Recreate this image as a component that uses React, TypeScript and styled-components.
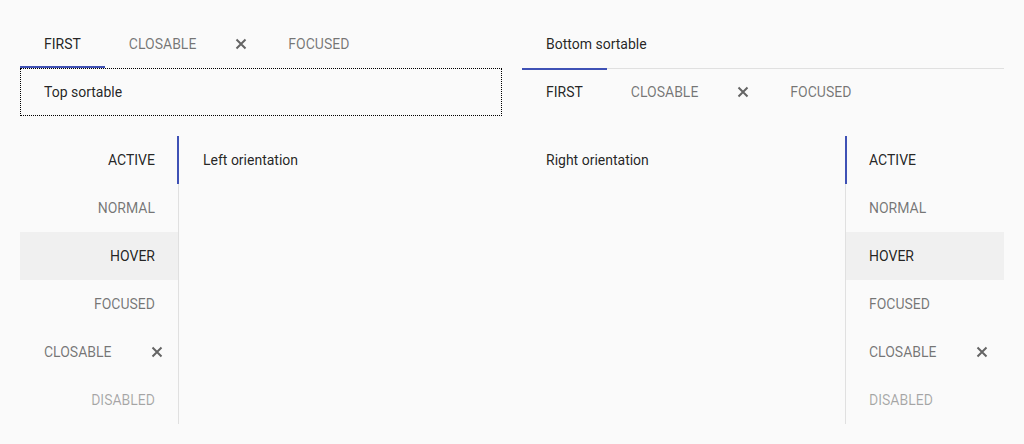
import styled, {createGlobalStyle} from "styled-components";

const GlobalStyle = createGlobalStyle`
  html, body {
    margin: 0;
    background: #fafafa;
    font-family: Roboto, "Noto Sans", sans-serif;
    font-size: 14px;
    color: rgba(0, 0, 0, 0.87);
  }
  * {
    box-sizing: border-box;
  }
`

const Page = styled.div`
  padding: 20px;
  display: grid;
  grid-template-columns: 482px 482px;
  column-gap: 20px;
  row-gap: 20px;
  align-items: start;
`

const Cell = styled.div`
  display: flex;
  flex-direction: column;
`

const Row = styled.div`
  display: flex;
  align-items: stretch;
`

const TabBar = styled.div<{ $lined?: boolean }>`
  display: flex;
  flex: 0 0 48px;
  height: 48px;
  box-shadow: ${p => p.$lined ? "inset 0 1px 0 #e0e0e0" : "none"};
`

type Side = "top" | "bottom" | "left" | "right";

const tabPadding = (side?: Side, closable?: boolean) => {
    if (side === "left") return closable ? "0 9px 0 24px" : "0 23px";
    if (side === "right") return closable ? "0 10px 0 23px" : "0 23px";
    return closable ? "0 11px 0 24px" : "0 24px";
}

const Tab = styled.div<{ $active?: boolean; $disabled?: boolean; $hover?: boolean; $side?: Side; $closable?: boolean }>`
  position: relative;
  display: flex;
  align-items: center;
  flex-shrink: 0;
  height: 48px;
  padding: ${p => tabPadding(p.$side, p.$closable)};
  white-space: nowrap;
  text-transform: uppercase;
  color: ${p => p.$disabled ? "rgba(0, 0, 0, 0.34)" : p.$active || p.$hover ? "rgba(0, 0, 0, 0.87)" : "rgba(0, 0, 0, 0.54)"};
  background: ${p => p.$hover ? "#f0f0f0" : "transparent"};
  justify-content: ${p => p.$side === "left" && !p.$closable ? "flex-end" : "flex-start"};

  &::after {
    content: "";
    display: ${p => p.$active ? "block" : "none"};
    position: absolute;
    background: #3f51b5;
    ${p => p.$side === "top" && "left: 0; right: 0; bottom: 0; height: 2px;"}
    ${p => p.$side === "bottom" && "left: 0; right: 0; top: 0; height: 2px;"}
    ${p => p.$side === "left" && "top: 0; bottom: 0; right: -1px; width: 2px;"}
    ${p => p.$side === "right" && "top: 0; bottom: 0; left: -1px; width: 2px;"}
  }
`

const CloseButton = styled.span<{ $vertical?: boolean }>`
  display: flex;
  align-items: center;
  justify-content: center;
  width: 24px;
  height: 24px;
  margin-left: ${p => p.$vertical ? "auto" : "33px"};
  color: rgba(0, 0, 0, 0.6);
`

const VerticalTabs = styled.div<{ $side: "left" | "right" }>`
  display: flex;
  flex-direction: column;
  width: 159px;
  flex-shrink: 0;
  border-right: ${p => p.$side === "left" ? "1px solid #e0e0e0" : "none"};
  border-left: ${p => p.$side === "right" ? "1px solid #e0e0e0" : "none"};
`

const Panel = styled.div<{ $focused?: boolean }>`
  flex: 0 0 48px;
  height: 48px;
  display: flex;
  align-items: center;
  padding-left: ${p => p.$focused ? "23px" : "24px"};
  border: ${p => p.$focused ? "1px dotted #000" : "none"};
  color: rgba(0, 0, 0, 0.87);
`

const SidePanel = styled.div`
  flex: 1;
  padding: 0 24px;
  height: 48px;
  display: flex;
  align-items: center;
`

const CloseIcon = () => (
    <svg width="12" height="12" viewBox="0 0 12 12" fill="none" stroke="currentColor" strokeWidth="2">
        <path d="M1.5 1.5 L10.5 10.5 M10.5 1.5 L1.5 10.5"/>
    </svg>
)

const HorizontalTabs = ({side}: { side: "top" | "bottom" }) => (
    <TabBar $lined={side === "bottom"}>
        <Tab $side={side} $active>First</Tab>
        <Tab $side={side} $closable>
            Closable
            <CloseButton><CloseIcon/></CloseButton>
        </Tab>
        <Tab $side={side}>Focused</Tab>
    </TabBar>
)

const SideTabs = ({side}: { side: "left" | "right" }) => (
    <VerticalTabs $side={side}>
        <Tab $side={side} $active>Active</Tab>
        <Tab $side={side}>Normal</Tab>
        <Tab $side={side} $hover>Hover</Tab>
        <Tab $side={side}>Focused</Tab>
        <Tab $side={side} $closable>
            Closable
            <CloseButton $vertical><CloseIcon/></CloseButton>
        </Tab>
        <Tab $side={side} $disabled>Disabled</Tab>
    </VerticalTabs>
)

const App = () => {
    return (
        <>
            <GlobalStyle/>
            <Page>
                <Cell>
                    <HorizontalTabs side="top"/>
                    <Panel $focused>Top sortable</Panel>
                </Cell>
                <Cell>
                    <Panel>Bottom sortable</Panel>
                    <HorizontalTabs side="bottom"/>
                </Cell>
                <Row>
                    <SideTabs side="left"/>
                    <SidePanel>Left orientation</SidePanel>
                </Row>
                <Row>
                    <SidePanel>Right orientation</SidePanel>
                    <SideTabs side="right"/>
                </Row>
            </Page>
        </>
    )
}

export default App;
